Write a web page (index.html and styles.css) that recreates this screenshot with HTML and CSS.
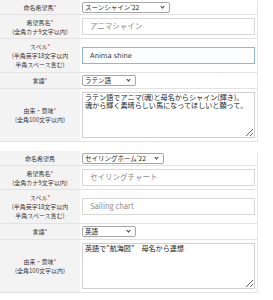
FILE: index.html
```html
<!DOCTYPE html>
<html lang="ja">
<head>
    <meta charset="UTF-8">
    <meta name="viewport" content="width=device-width, initial-scale=1.0">
    <title>馬名応募</title>
    <link rel="stylesheet" href="styles.css">
</head>
<body>

<table class="horse-form">
    <tr class="row-select first">
        <th>命名希望馬<span class="req">*</span></th>
        <td>
            <span class="select-wrap horse">
                <select class="form-select">
                    <option>スーンシャイン'22</option>
                </select>
            </span>
        </td>
    </tr>
    <tr>
        <th>希望馬名<span class="req">*</span><br>(全角カナ9文字以内)</th>
        <td><input type="text" class="text-input" placeholder="アニマシャイン"></td>
    </tr>
    <tr class="row-spell">
        <th>スペル<span class="req">*</span><br>(半角英字18文字以内<br>半角スペース含む)</th>
        <td><input type="text" class="text-input focused" value="Anima shine"></td>
    </tr>
    <tr class="row-select">
        <th>言語<span class="req">*</span></th>
        <td>
            <span class="select-wrap lang">
                <select class="form-select">
                    <option>ラテン語</option>
                </select>
            </span>
        </td>
    </tr>
    <tr>
        <th>由来・意味<span class="req">*</span><br>(全角100文字以内)</th>
        <td><textarea class="meaning">ラテン語でアニマ(魂)と母名からシャイン(輝き)。
魂から輝く素晴らしい馬になってほしいと願って。</textarea></td>
    </tr>
</table>

<table class="horse-form">
    <tr class="row-select first">
        <th>命名希望馬</th>
        <td>
            <span class="select-wrap horse short">
                <select class="form-select">
                    <option>セイリングホーム'22</option>
                </select>
            </span>
        </td>
    </tr>
    <tr>
        <th>希望馬名<span class="req">*</span><br>(全角カナ9文字以内)</th>
        <td><input type="text" class="text-input" placeholder="セイリングチャート"></td>
    </tr>
    <tr class="row-spell">
        <th>スペル<span class="req">*</span><br>(半角英字18文字以内<br>半角スペース含む)</th>
        <td><input type="text" class="text-input" placeholder="Sailing chart"></td>
    </tr>
    <tr class="row-select">
        <th>言語<span class="req">*</span></th>
        <td>
            <span class="select-wrap lang">
                <select class="form-select">
                    <option>英語</option>
                </select>
            </span>
        </td>
    </tr>
    <tr>
        <th>由来・意味<span class="req">*</span><br>(全角100文字以内)</th>
        <td><textarea class="meaning">英語で"航海図"　母名から連想</textarea></td>
    </tr>
</table>

</body>
</html>
```

FILE: styles.css
```css
body {
    margin: 0;
    font-family: "Noto Sans CJK JP", "Noto Sans", sans-serif;
    color: #333;
    background-color: #fff;
}

.horse-form {
    width: 258px;
    border-collapse: collapse;
    margin-bottom: 9px;
    border-right: 1px solid #e6e6e6;
}

.horse-form th {
    width: 80px;
    padding: 2px 2px;
    background-color: #f3f3f3;
    font-size: 6px;
    font-weight: normal;
    line-height: 9px;
    text-align: center;
    color: #3a3a3a;
    border-bottom: 1px solid #e2e2e2;
}

.horse-form td {
    padding: 3px 2px;
    font-size: 0;
    line-height: 0;
    border-bottom: 1px solid #e2e2e2;
}

.row-select td {
    padding: 2px 2px;
}

.row-select.first td {
    padding: 2px 2px 1px;
}

.row-spell th {
    padding: 3px 2px;
}

.req {
    color: #e0304a;
}

.select-wrap {
    position: relative;
    display: inline-block;
}

.select-wrap::after {
    content: "";
    position: absolute;
    right: 6px;
    top: 3px;
    width: 2px;
    height: 2px;
    border-right: 1px solid #333;
    border-bottom: 1px solid #333;
    transform: rotate(45deg);
    pointer-events: none;
}

.form-select {
    appearance: none;
    -webkit-appearance: none;
    display: block;
    box-sizing: border-box;
    width: 100%;
    height: 11px;
    padding: 0 2px;
    font-family: "Noto Sans CJK JP", sans-serif;
    font-size: 6.5px;
    line-height: 9px;
    color: #222;
    border: 1px solid #a6a6a6;
    border-radius: 2px;
    background-color: #fff;
}

.select-wrap.horse {
    width: 88px;
}

.select-wrap.horse.short {
    width: 82px;
}

.select-wrap.lang {
    width: 54px;
}

.text-input {
    display: block;
    box-sizing: border-box;
    width: 173px;
    height: 17px;
    padding: 0 7px;
    font-family: "DejaVu Sans", "Noto Sans CJK JP", sans-serif;
    font-size: 6.8px;
    color: #333;
    border: 1px solid #d8d8d8;
    background-color: #fff;
}

.text-input::placeholder {
    font-family: "Noto Sans CJK JP", "DejaVu Sans", sans-serif;
    font-size: 7.5px;
    color: #8c8c8c;
}

.text-input.focused {
    border-color: #8fb4e3;
    background-color: #fbfdff;
}

.meaning {
    display: block;
    box-sizing: border-box;
    width: 173px;
    height: 46px;
    padding: 1px 2px;
    font-family: "Noto Sans CJK JP", sans-serif;
    font-size: 7.1px;
    line-height: 7.5px;
    color: #222;
    border: 1px solid #d0d0d0;
    resize: vertical;
}
```
